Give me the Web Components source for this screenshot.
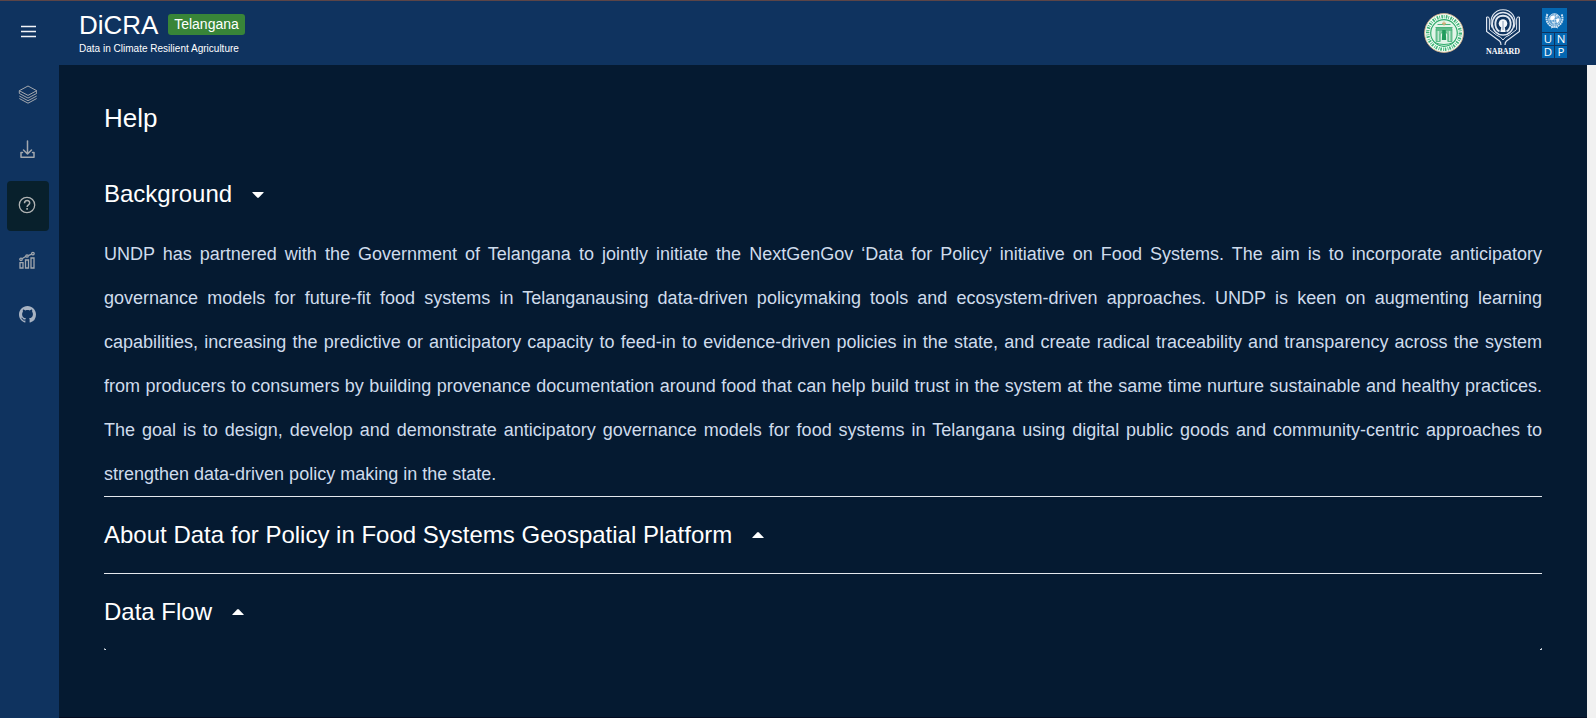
<!DOCTYPE html>
<html lang="en">
<head>
<meta charset="utf-8">
<title>DiCRA - Help</title>
<style>
html,body{margin:0;height:100%;overflow:hidden;background:#f1f1f1;font-family:"Liberation Sans",Arial,sans-serif;color:#fff}
</style>
</head>
<body>
<dicra-app></dicra-app>
<script>
const define = (name, html) => customElements.define(name, class extends HTMLElement {
  constructor() {
    super();
    const t = document.createElement('template');
    t.innerHTML = html;
    this.attachShadow({mode: 'open'}).append(t.content.cloneNode(true));
  }
});

define('state-emblem', `
<style>:host{display:block;width:40px;height:40px}svg{display:block}</style>
<svg width="40" height="40" viewBox="0 0 40 40">
  <circle cx="20" cy="20" r="19.400" fill="#f4fff8" stroke="#cfae86" stroke-width=".9"/>
  <circle cx="20" cy="20" r="16.300" fill="none" stroke="#3fb377" stroke-width="3.400" stroke-dasharray="1.600 .9 .8 1.300"/>
  <circle cx="20" cy="20" r="13.300" fill="#e2f5e9" stroke="#2fab6b" stroke-width="1.200"/>
  <path d="M12 28.500V15.500h16v13h-4.200v-7.500q-3.800-4-7.600 0v7.500z" fill="#7fcba1" stroke="#38aa6f" stroke-width=".7"/>
  <path d="M11.500 14.500h17M12 17h16M13.500 11.500h13" stroke="#38aa6f" stroke-width=".9"/>
  <path d="M14.300 18v10M25.700 18v10" stroke="#e9f8ef" stroke-width=".8"/>
  <path d="M18.300 17h3.400l.5 10h-4.400z" fill="#1f9b5c"/>
  <path d="M18 10.500h4M20 8.500v4" stroke="#d3b07d" stroke-width="1.300"/>
  <path d="M10.500 29.500q9.500 4 19 0" fill="none" stroke="#2fab6b" stroke-width="1"/>
</svg>`);

define('nabard-logo', `
<style>:host{display:block;width:36px;height:47px}svg{display:block}text{font:bold 8.400px "Liberation Serif",serif;fill:#fff}</style>
<svg width="36" height="47" viewBox="0 0 36 47">
  <g fill="none" stroke="#dfe6f0">
    <path d="M7 19.500C3.500 9 10 1.700 18 1.700S32.500 9 29 19.500" stroke-width="1.100"/>
    <path d="M18 27c-6 0-10.800-5-10.800-11.200S12 4.600 18 4.600s10.800 5 10.800 11.200S24 27 18 27z" stroke-width="1.500"/>
    <path d="M14.500 23.500c-6-3-6-15.800 3.500-15.800s9.500 12.800 3.500 15.800" stroke-width="1.900"/>
    <circle cx="18" cy="15.500" r="4.300" fill="#f4f7fb" stroke="none"/>
    <path d="M16.300 19h3.400l1 5h-5.400z" fill="#f4f7fb" stroke="none"/>
    <path d="M18 13v9" stroke="#6e86a6" stroke-width=".8"/>
    <path d="M1.600 9v14.500L14.500 33q1.500 1.200 1.500 4M34.400 9v14.500L21.500 33q-1.500 1.200-1.500 4" stroke-width="1.200"/>
    <path d="M4.400 11v10.500l7 5.500q5 2 6.600 5 1.600-3 6.600-5l7-5.500V11" stroke-width="1"/>
    <path d="M1.600 9q2.400-1 2.800 2M34.400 9q-2.400-1-2.800 2"/>
  </g>
  <text x="1" y="46.200" textLength="34" lengthAdjust="spacingAndGlyphs">NABARD</text>
</svg>`);

define('undp-logo', `
<style>
:host{display:grid;grid-template-columns:12px 12px;grid-template-rows:24px 12px 12px;gap:1px;width:25px;height:50px}
div{background:#0467b1;color:#fff;font:11.500px/12px "Open Sans","Liberation Sans",sans-serif;text-align:center}
.g{grid-column:1/3}svg{display:block;margin:4px auto 0}
</style>
<div class="g"><svg width="19" height="17" viewBox="0 0 19 17" fill="none" stroke="#cfe2f2">
 <circle cx="9.500" cy="7.500" r="5.800" fill="#5c9dd0" stroke-width=".9"/><circle cx="9.500" cy="7.500" r="3.100" stroke-width=".7"/>
 <path d="M3.700 7.500h11.600M9.500 1.700v11.600" stroke-width=".6"/>
 <path d="M5.500 4.500l3-1.200 1.500 2-2 3-3-.8zM11 7.300l3-1v3l-2 2.200zM10.500 3l2.500.5-1 1.500zM7 10l2 .5-.8 1.500z" fill="#fff" stroke="none"/>
 <path d="M2.500 2Q-.2 8.500 4.500 13q2.500 1.900 5 1.700 2.500.2 5-1.700Q19.200 8.500 16.500 2" stroke-width="2" stroke-dasharray="1.800 .5"/>
 <path d="M6 16l3.500-1.300L13 16"/></svg></div>
<div>U</div><div>N</div><div>D</div><div>P</div>`);

define('state-tag', `
<style>:host{display:block;box-sizing:border-box;width:77px;height:21px;border-radius:3px;background:#388538;font-size:14px;line-height:20px;text-align:center;white-space:nowrap}</style><slot></slot>`);

define('app-header', `
<style>
:host{display:flex;box-sizing:border-box;height:65px;border-top:1px solid #5c4547;background:#0f335f;padding:0 29px 0 20px;justify-content:space-between}
.row{display:flex;gap:10px;padding-top:8px;height:32px}
h1{margin:0;width:79px;font-size:26px;font-weight:400;line-height:32px}
state-tag{margin-top:5px}
p{margin:1px 0 0;font-size:10px;line-height:13px;white-space:nowrap;letter-spacing:.01px}
.logos{display:flex;align-items:flex-start}
state-emblem{margin:12px 21px 0 0}nabard-logo{margin:7px 21px 0 0}undp-logo{margin-top:7px}
</style>
<div><div class="row"><h1>DiCRA</h1><state-tag>Telangana</state-tag></div><p>Data in Climate Resilient Agriculture</p></div>
<div class="logos"><state-emblem></state-emblem><nabard-logo></nabard-logo><undp-logo></undp-logo></div>`);

define('nav-item', `
<style>:host{display:flex;box-sizing:border-box;width:42px;height:50px;border-radius:4px;align-items:center;justify-content:center;padding:0 1.500px 3px 0;color:#a3a8ae}
:host([active]){background:#08202c;color:#b0b3b3}</style><slot></slot>`);

define('side-nav', `
<style>
:host{display:flex;flex-direction:column;box-sizing:border-box;width:59px;height:718px;background:#0f335f;border-top:1px solid #5c4547;padding:23px 0 0 7px;gap:5px}
.menu{height:42px;padding-left:14px}svg{display:block}
</style>
<div class="menu"><svg width="16" height="14" viewBox="0 0 16 14" stroke="#f2f4f7" stroke-width="1.700"><path d="M0 2.500h15M0 7.500h15M0 12.500h15"/></svg></div>
<nav-item><svg width="19" height="20" viewBox="0 0 19 20" fill="none" stroke="currentColor" stroke-width="1" stroke-linejoin="round"><path d="M10 1l8.700 4.700L10 10.400 1.300 5.700z"/><path d="M1.300 8.400l8.700 4.700 8.700-4.700M1.300 11l8.700 4.700 8.700-4.700M1.300 13.500l8.700 4.700 8.700-4.700M1.300 5.700v2.700M18.700 5.700v2.700"/></svg></nav-item>
<nav-item><svg width="16" height="20" viewBox="0 0 16 20" fill="none" stroke="currentColor" stroke-width="1.500" stroke-linecap="round" stroke-linejoin="round"><path d="M8.500 1v13M4.500 10l4 4 4-4M2 12.500v4.700h13v-4.700M3.500 12.500H2M13.500 12.500H15"/></svg></nav-item>
<nav-item active><svg width="18" height="18" viewBox="0 0 18 18" fill="none" stroke="currentColor" stroke-width="1.300"><circle cx="9" cy="9" r="7.700"/><path d="M6.500 7.200c0-3.400 5.200-3.400 5.200-.3 0 1.900-2.600 1.900-2.600 4" stroke-width="1.500"/><path d="M9.100 12v1.700" stroke-width="1.600"/></svg></nav-item>
<nav-item><svg width="16" height="18" viewBox="0 0 16 18" fill="none" stroke="currentColor" stroke-width="1.300"><path d="M1 11.600h3V17H1zM6.500 9h3v8h-3zM12 7h3v10h-3z"/><path d="M3 7.800l4-2.500M9.200 4.700l3.500-1.500"/><circle cx="2" cy="8.300" r="1.200"/><circle cx="8" cy="5" r="1.200"/><circle cx="13.900" cy="2.600" r="1.300"/></svg></nav-item>
<nav-item><svg width="17" height="17" viewBox="0 0 16 16" fill="#a8b3c2"><path d="M8 0C3.580 0 0 3.580 0 8c0 3.540 2.290 6.530 5.470 7.590.4.070.55-.17.55-.38 0-.19-.01-.82-.01-1.490-2.010.37-2.530-.49-2.690-.94-.09-.23-.48-.94-.82-1.130-.28-.15-.68-.52-.01-.53.63-.01 1.080.58 1.230.82.72 1.210 1.870.87 2.330.66.07-.52.28-.87.51-1.070-1.780-.2-3.640-.89-3.640-3.950 0-.87.31-1.590.82-2.150-.08-.2-.36-1.020.08-2.120 0 0 .67-.21 2.200.82.64-.18 1.320-.27 2-.27s1.360.09 2 .27c1.530-1.040 2.200-.82 2.200-.82.44 1.100.16 1.920.08 2.120.51.56.82 1.270.82 2.150 0 3.070-1.870 3.750-3.650 3.950.29.25.54.73.54 1.480 0 1.070-.01 1.930-.01 2.200 0 .21.15.46.55.38A8 8 0 0 0 16 8c0-4.420-3.580-8-8-8z"/></svg></nav-item>`);

define('help-section', `
<style>
:host{display:block;box-sizing:border-box;border-bottom:1px solid #e4e8ed}
.head{display:flex;align-items:center;height:76px;gap:19.500px}
h2{margin:0;font-size:24px;font-weight:400;line-height:30px;white-space:nowrap}
svg{display:block}
:host([open]) svg{transform:translateY(1px) rotate(180deg)}
.body{display:none}
:host([open]) .body{display:block;color:#cfdcec;font-size:18px;line-height:44px;text-align:justify}
:host([last]){border:0}
.end{display:none}
:host([last]) .end{display:flex;justify-content:space-between;height:2px;margin-top:-2px}
.end i{width:2px;height:2px;box-sizing:border-box;border-bottom:1px solid #dfe3e9;border-left:1px solid #7a8795}
.end i+i{border-left:0;border-right:1px solid #a8b1bc}
</style>
<div class="head"><h2><slot name="title"></slot></h2><svg width="12" height="6" viewBox="0 0 12 6"><path d="M.8 6Q0 6 .5 5.200L5.200.4Q6-.3 6.800.4L11.500 5.200Q12 6 11.200 6z" fill="#fff"/></svg></div>
<div class="body"><slot></slot></div><div class="end"><i></i><i></i></div>`);

define('help-page', `
<style>
:host{display:block;box-sizing:border-box;height:653px;width:1528px;padding:38px 45px 0;background:#051a31;border-bottom:1px solid #030c22}
h1{margin:0 0 23px;font-size:26px;font-weight:400;line-height:30px}
</style>
<h1>Help</h1>
<help-section open><span slot="title">Background</span>UNDP has partnered with the Government of Telangana to jointly initiate the NextGenGov ‘Data for Policy’ initiative on Food Systems. The aim is to incorporate anticipatory governance models for future-fit food systems in Telanganausing data-driven policymaking tools and ecosystem-driven approaches. UNDP is keen on augmenting learning capabilities, increasing the predictive or anticipatory capacity to feed-in to evidence-driven policies in the state, and create radical traceability and transparency across the system from producers to consumers by building provenance documentation around food that can help build trust in the system at the same time nurture sustainable and healthy practices. The goal is to design, develop and demonstrate anticipatory governance models for food systems in Telangana using digital public goods and community-centric approaches to strengthen data-driven policy making in the state.</help-section>
<help-section><span slot="title">About Data for Policy in Food Systems Geospatial Platform</span></help-section>
<help-section last><span slot="title">Data Flow</span></help-section>`);

define('dicra-app', `
<style>:host{display:grid;grid-template-columns:59px 1fr;height:718px;overflow:hidden}</style>
<side-nav></side-nav><main><app-header></app-header><help-page></help-page></main>`);
</script>
</body>
</html>
